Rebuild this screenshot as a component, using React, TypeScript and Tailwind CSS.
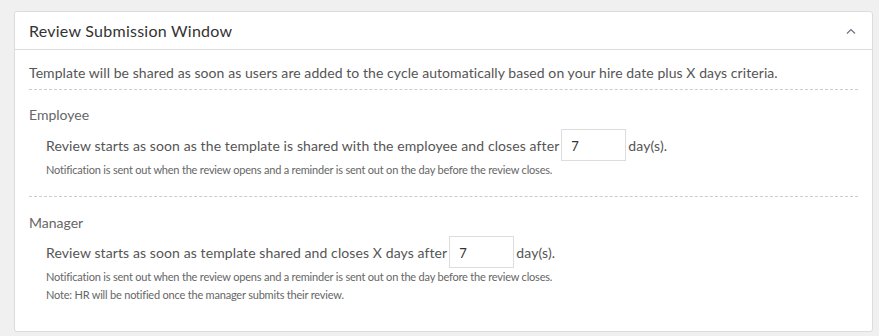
import React from "react";

function Chevron() {
  return (
    <svg width="10" height="6" viewBox="0 0 10 6" fill="none" className="block">
      <polyline points="1,5.5 5,1.5 9,5.5" stroke="#6b7280" strokeWidth="1.2" fill="none" />
    </svg>
  );
}

function DaysRow({ text }: { text: string }) {
  return (
    <div className="flex items-center pl-[17px] text-[14px] tracking-[0.1px] text-[#555]">
      <span>{text}</span>
      <div className="ml-[2px] flex h-[32px] w-[65px] items-center border border-[#ddd] bg-white pl-[9px] pt-[3px] text-[13px] text-[#333]">
        7
      </div>
      <span className="ml-[2px]">day(s).</span>
    </div>
  );
}

export default function App() {
  return (
    <div className="min-h-[336px] w-full bg-[#f0f0f0] pt-[11px] pl-[14px]" style={{ fontFamily: "Lato, 'Noto Sans', sans-serif" }}>
      <div className="w-[859px] h-[321px] rounded-[3px] border border-[#dcdcdc] bg-white">
        <div className="flex h-[38px] items-center justify-between border-b border-[#dcdcdc] pl-[14px] pr-[16px]">
          <span className="text-[16px] tracking-[0.25px] text-[#333]">Review Submission Window</span>
          <Chevron />
        </div>
        <div className="px-[14px] pt-[13px]">
          <p className="border-b border-dashed border-[#ccc] pb-[6px] text-[14px] leading-[20px] tracking-[0.07px] text-[#555]">
            Template will be shared as soon as users are added to the cycle automatically based on your hire date plus X days criteria.
          </p>
          <div className="border-b border-dashed border-[#ccc] pb-[17px]">
            <div className="mt-[15px] text-[14px] leading-[20px] text-[#666]">Employee</div>
            <div className="mt-[4px]">
              <DaysRow text="Review starts as soon as the template is shared with the employee and closes after" />
            </div>
            <div className="pl-[17px] text-[11px] leading-[18px] tracking-[-0.2px] text-[#666]">
              Notification is sent out when the review opens and a reminder is sent out on the day before the review closes.
            </div>
          </div>
          <div className="mt-[16px] text-[14px] leading-[20px] text-[#666]">Manager</div>
          <div className="mt-[3px]">
            <DaysRow text="Review starts as soon as template shared and closes X days after" />
          </div>
          <div className="pl-[17px] text-[11px] leading-[18px] tracking-[-0.2px] text-[#666]">
            <div>Notification is sent out when the review opens and a reminder is sent out on the day before the review closes.</div>
            <div>Note: HR will be notified once the manager submits their review.</div>
          </div>
        </div>
      </div>
    </div>
  );
}
